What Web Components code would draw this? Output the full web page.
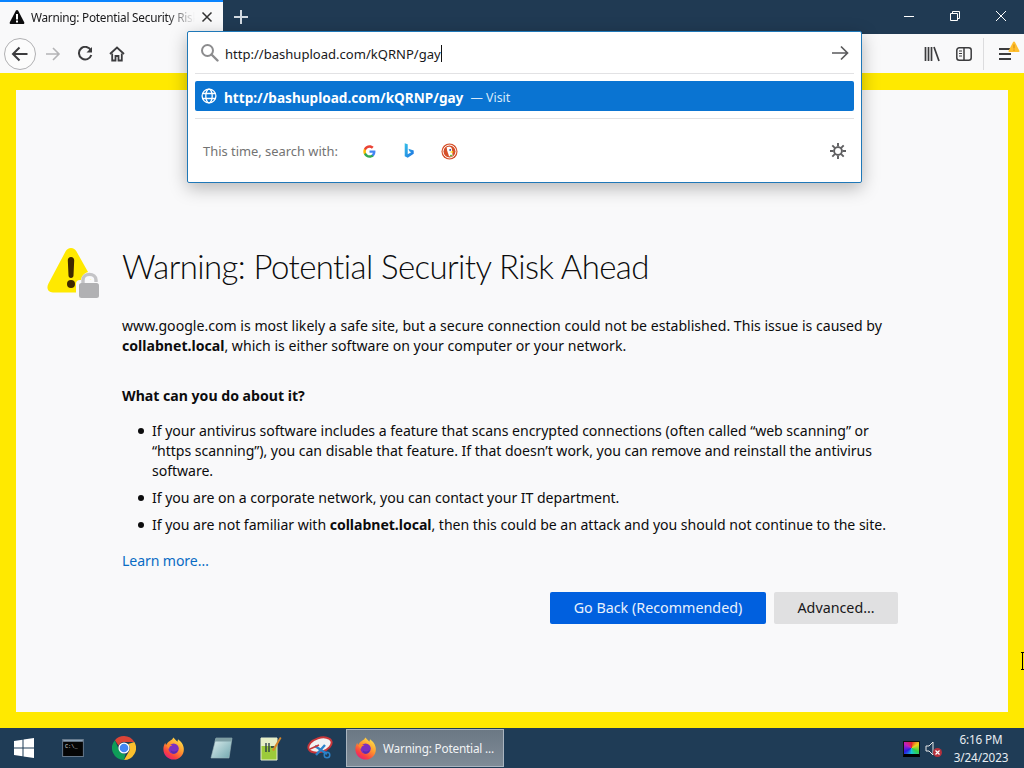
<!DOCTYPE html>
<html lang="en">
<head>
<meta charset="utf-8">
<title>Warning: Potential Security Risk Ahead</title>
<style>
  html, body { margin: 0; padding: 0; height: 100%; overflow: hidden; }
  body { font-family: "Noto Sans", "Open Sans", sans-serif; }
</style>
</head>
<body>
<app-window>
  <browser-tabbar slot="top"></browser-tabbar>
  <browser-toolbar slot="top"></browser-toolbar>
  <cert-error slot="main"></cert-error>
  <url-panel slot="main"></url-panel>
  <win-taskbar slot="bottom"></win-taskbar>
</app-window>

<script>
const FIREFOX = `
<svg viewBox="2 0 28 30.500" width="100%" height="100%">
  <defs>
    <linearGradient id="fxa" x1="0.8" y1="0.05" x2="0.2" y2="1">
      <stop offset="0" stop-color="#ffe14a"/><stop offset=".4" stop-color="#ff9a2e"/>
      <stop offset=".75" stop-color="#f9423f"/><stop offset="1" stop-color="#e31587"/>
    </linearGradient>
  </defs>
  <path fill="url(#fxa)" d="M16 30C8 30 2.500 24 2.500 16.500c0-3 .9-5.800 2.400-8 .1 1.300.6 2.400 1.300 3 .6-2.300 2.300-4.200 4.500-5.300 1.500-.8 3.300-1.200 4.300-4.200 2.200 1.600 2.800 3.500 5.500 5.200 0-.8.100-1.800.6-3.200 4.200 2.800 7.400 7.500 7.400 12.500C28.700 24 23 30 16 30z"/>
  <circle cx="15.500" cy="16" r="6.600" fill="#7d2fc0"/>
  <path fill="#ff8a2a" d="M6 11c3 .5 5-.3 8 .8-2.500.5-4.500 2-4.300 5-.8-1.500-2.800-3.200-3.700-5.800z"/>
  <path fill="#5b2ea8" d="M12 18c2 2.500 6 2.500 9-.5-.5 3-3 5-5.500 5-2 0-3.200-2-3.500-4.500z"/>
</svg>`;

class AppWindow extends HTMLElement {
  constructor() {
    super();
    this.attachShadow({ mode: "open" }).innerHTML = `
    <style>
      :host { display: flex; flex-direction: column; width: 1024px; height: 768px; position: relative; overflow: hidden; }
      .main { flex: 1; display: flex; min-height: 0; }
    </style>
    <slot name="top"></slot>
    <div class="main"><slot name="main"></slot></div>
    <slot name="bottom"></slot>`;
  }
}

class BrowserTabbar extends HTMLElement {
  constructor() {
    super();
    this.attachShadow({ mode: "open" }).innerHTML = `
    <style>
      :host { display: flex; height: 34px; background: #203a53; color: #fff; flex: none; }
      .tab { width: 223px; box-sizing: border-box; background: #f9f9fa; border-top: 2px solid #0a84ff; display: flex; align-items: center; padding: 0 0 2px 9px; color: #18181a; }
      .label { font-size: 11.8px; letter-spacing: -.25px; width: 164px; margin-left: 6px; white-space: nowrap; overflow: hidden; -webkit-mask-image: linear-gradient(to right, #000 135px, transparent 164px); mask-image: linear-gradient(to right, #000 135px, transparent 164px); }
      .close { margin-left: 6px; display: flex; }
      .plus { width: 34px; margin-left: 1px; display: flex; align-items: center; justify-content: center; }
      .space { flex: 1; }
      .ctl { width: 46px; display: flex; align-items: center; justify-content: center; padding-bottom: 3px; box-sizing: border-box; }
    </style>
    <div class="tab">
      <svg width="16" height="16" viewBox="0 0 16 16"><path fill="#0c0c0d" d="M8 1c.5 0 .9.300 1.200.8l6 11.400c.5 1-.1 1.800-1.100 1.800H1.900C.9 15 .3 14.200.8 13.200l6-11.400C7.100 1.300 7.500 1 8 1z"/><rect x="7" y="5" width="2" height="5.500" fill="#fff"/><rect x="7" y="11.500" width="2" height="2" fill="#fff"/></svg>
      <span class="label">Warning: Potential Security Risk Ahead</span>
      <span class="close"><svg width="12" height="12" viewBox="0 0 12 12"><path d="M1.500 1.500l9 9M10.500 1.500l-9 9" stroke="#333" stroke-width="1.500" fill="none"/></svg></span>
    </div>
    <div class="plus"><svg width="16" height="16" viewBox="0 0 16 16"><path d="M8 1v14M1 8h14" stroke="#d3dae1" stroke-width="2" fill="none"/></svg></div>
    <div class="space"></div>
    <div class="ctl"><svg width="12" height="12" viewBox="0 0 12 12"><path d="M1 6.500h10" stroke="#fff" fill="none"/></svg></div>
    <div class="ctl"><svg width="12" height="12" viewBox="0 0 12 12"><path d="M1.500 3.500h7v7h-7zM3.500 3.500v-2h7v7h-2" stroke="#fff" fill="none"/></svg></div>
    <div class="ctl"><svg width="12" height="12" viewBox="0 0 12 12"><path d="M1 1l10 10M11 1L1 11" stroke="#fff" fill="none"/></svg></div>`;
  }
}

class ToolButton extends HTMLElement {
  constructor() {
    super();
    this.attachShadow({ mode: "open" }).innerHTML = `
    <style>
      :host { display: flex; align-items: center; justify-content: center; width: 32px; height: 32px; position: relative; color: #3c3c3e; flex: none; }
      :host([ring]) { box-sizing: border-box; border: 1px solid #b1b1b3; border-radius: 50%; background: #fcfcfc; }
      :host([dim]) { color: #b4b4b6; }
    </style>
    <slot></slot>`;
  }
}

class BrowserToolbar extends HTMLElement {
  constructor() {
    super();
    this.attachShadow({ mode: "open" }).innerHTML = `
    <style>
      :host { display: flex; align-items: center; height: 39px; background: #f9f9fa; padding: 0 3px 0 4px; box-sizing: border-box; flex: none; position: relative; }
      .space { flex: 1; }
      .fwd { margin-left: 1px; }
      .sep { width: 1px; height: 32px; background: #dcdcde; margin: 0 5px 0 3px; }
      .badge { position: absolute; left: 19px; top: 3px; }
    </style>
    <tool-button ring><svg width="18" height="18" viewBox="0 0 18 18"><path d="M16.500 9H2M8.500 2.500L2 9l6.500 6.500" fill="none" stroke="currentColor" stroke-width="2"/></svg></tool-button>
    <tool-button dim class="fwd"><svg width="16" height="16" viewBox="0 0 16 16"><path d="M1 8h13M8 2l6 6-6 6" fill="none" stroke="currentColor" stroke-width="1.600"/></svg></tool-button>
    <tool-button><svg width="16" height="16" viewBox="0 0 16 16"><path d="M14 4.500A6.300 6.300 0 1 0 14.300 9" fill="none" stroke="currentColor" stroke-width="2"/><path d="M15 1v5.500H9.500z" fill="currentColor"/></svg></tool-button>
    <tool-button><svg width="16" height="16" viewBox="0 0 16 16"><path d="M1 8l7-6.500L15 8" fill="none" stroke="currentColor" stroke-width="1.800"/><path d="M3.200 7.500V14.500h3.300V10h3v4.500h3.300V7.500" fill="none" stroke="currentColor" stroke-width="1.800"/></svg></tool-button>
    <div class="space"></div>
    <tool-button><svg width="16" height="16" viewBox="0 0 16 16"><path d="M1.500 1v14M4.500 1v14M7.500 1v14M10 1l5 14" fill="none" stroke="currentColor" stroke-width="1.700"/></svg></tool-button>
    <tool-button><svg width="16" height="16" viewBox="0 0 16 16"><rect x=".8" y="1.800" width="14.400" height="12.400" rx="2.500" fill="none" stroke="currentColor" stroke-width="1.500"/><path d="M8 2v12" stroke="currentColor" stroke-width="1.500"/><path d="M3 5h3M3 7.500h3M3 10h3" stroke="currentColor" stroke-width="1.200"/></svg></tool-button>
    <div class="sep"></div>
    <tool-button>
      <svg width="16" height="16" viewBox="0 0 16 16"><path d="M2 3h12M2 8h12M2 13h12" stroke="currentColor" stroke-width="2" fill="none"/></svg>
      <svg class="badge" width="12" height="12" viewBox="0 0 12 12"><path d="M6 .5c.4 0 .7.200.9.600l4.500 8.600c.4.800-.1 1.300-.8 1.300H1.400c-.8 0-1.200-.6-.8-1.300L5.100 1.100C5.300.7 5.600.5 6 .5z" fill="#ffbf2e"/><path d="M6 3.500v4M6 8.500v1.200" stroke="#d98f10" stroke-width="1.200" fill="none"/></svg>
    </tool-button>`;
  }
}

class UrlPanel extends HTMLElement {
  constructor() {
    super();
    this.attachShadow({ mode: "open" }).innerHTML = `
    <style>
      :host { display: block; position: absolute; left: 187px; top: 31px; width: 675px; height: 152px; box-sizing: border-box; background: #fff; border: 1px solid #1f78b8; border-radius: 2px; box-shadow: 0 5px 18px rgba(0,0,0,.28); color: #18181a; z-index: 5; }
      .input { display: flex; align-items: center; height: 41px; padding: 0 12px 0 12px; font-size: 13.05px; }
      .input .q { width: 19px; height: 19px; flex: none; margin-right: 6px; }
      .url { padding-top: 2px; }
      .cursor { display: inline-block; width: 1px; height: 17px; background: #111; vertical-align: -3px; }
      .grow { flex: 1; }
      hr { border: 0; height: 1px; background: #e2e2e4; margin: 0 7px; }
      .row { margin: 7px; height: 30px; border-radius: 2px; background: #0a74d2; color: #fff; display: flex; align-items: center; padding-left: 6px; font-size: 13.6px; box-sizing: border-box; }
      .row svg { margin-right: 7px; flex: none; }
      .row b { font-weight: 700; padding-top: 2px; }
      .row .v { font-size: 12.4px; margin-left: 7px; padding-top: 2px; color: #d7e9fa; }
      .oneoff { display: flex; align-items: center; height: 64px; padding: 0 15px; color: #737373; font-size: 12.9px; }
      .oneoff span.t { width: 146px; flex: none; white-space: nowrap; }
      .eng { width: 40px; display: flex; justify-content: center; flex: none; }
    </style>
    <div class="input">
      <svg class="q" viewBox="0 0 19 19"><circle cx="7.500" cy="7.500" r="5.500" fill="none" stroke="#8c8c8e" stroke-width="2"/><path d="M11.500 11.500l6 6" stroke="#8c8c8e" stroke-width="2.400" stroke-linecap="round"/></svg>
      <span class="url">http://bashupload.com/kQRNP/gay<span class="cursor"></span></span>
      <span class="grow"></span>
      <svg width="18" height="18" viewBox="0 0 18 18"><path d="M1 9h15.500M10 2.500L16.500 9 10 15.500" fill="none" stroke="#5a5a5c" stroke-width="1.700"/></svg>
    </div>
    <hr>
    <div class="row">
      <svg width="16" height="16" viewBox="0 0 16 16" fill="none" stroke="#fff" stroke-width="1.300"><circle cx="8" cy="8" r="6.900"/><ellipse cx="8" cy="8" rx="3.200" ry="6.900"/><path d="M1.600 5.500h12.800M1.600 10.500h12.800"/></svg>
      <b>http://bashupload.com/kQRNP/gay</b><span class="v">— Visit</span>
    </div>
    <hr>
    <div class="oneoff">
      <span class="t">This time, search with:</span>
      <span class="eng"><svg width="13" height="13" viewBox="0 0 24 24"><path fill="#4285f4" d="M23 12.300c0-.8-.1-1.600-.2-2.300H12v4.400h6.200c-.3 1.400-1.100 2.600-2.300 3.400v2.800h3.700c2.100-2 3.400-4.900 3.400-8.300z"/><path fill="#34a853" d="M12 23.500c3.100 0 5.700-1 7.600-2.800l-3.700-2.900c-1 .7-2.300 1.100-3.900 1.100-3 0-5.500-2-6.400-4.800H1.800v3C3.700 21 7.500 23.500 12 23.500z"/><path fill="#fbbc05" d="M5.600 14.100c-.5-1.400-.5-2.900 0-4.300v-3H1.800c-1.600 3.200-1.600 7 0 10.300z"/><path fill="#ea4335" d="M12 5c1.700 0 3.200.6 4.400 1.700l3.300-3.300C17.700 1.600 15 .5 12 .5 7.500.5 3.700 3 1.800 6.800l3.800 3C6.500 7 9 5 12 5z"/></svg></span>
      <span class="eng"><svg width="12" height="16" viewBox="0 0 14 18"><defs><linearGradient id="bg" x1="0" y1="0" x2="1" y2="1"><stop offset="0" stop-color="#35c1e8"/><stop offset="1" stop-color="#1c6fe0"/></linearGradient></defs><path fill="url(#bg)" d="M2 0l3.500 1.200v11.600l4-2.400-2-1-1.200-3L12.500 8.500v3.800L5.500 17 2 15z"/></svg></span>
      <span class="eng"><svg width="17" height="17" viewBox="0 0 18 18"><circle cx="9" cy="9" r="8.500" fill="#d5502a"/><circle cx="9" cy="9" r="6.800" fill="none" stroke="#fff" stroke-width="1"/><path d="M6 4.500c2-1 5-.8 5.500 1.500l.8 8H8.500L6.500 8z" fill="#fff"/><circle cx="9.700" cy="7.300" r="1" fill="#2d4f8e"/><path d="M9 9.500l4-1-.5 2.200z" fill="#fdd20a"/><path d="M9.500 12.500h2.500v1.500H9.500z" fill="#65bc46"/></svg></span>
      <span class="grow"></span>
      <svg width="16" height="16" viewBox="0 0 16 16"><g stroke="#5f5f61" stroke-width="1.900" fill="none"><circle cx="8" cy="8" r="3.900"/><path d="M8 0v3.500M8 12.500V16M0 8h3.500M12.500 8H16M2.300 2.300l2.500 2.500M11.200 11.200l2.500 2.500M13.700 2.300l-2.500 2.500M4.800 11.200l-2.500 2.500"/></g></svg>
    </div>`;
  }
}

class CertError extends HTMLElement {
  constructor() {
    super();
    this.attachShadow({ mode: "open" }).innerHTML = `
    <style>
      :host { display: flex; flex: 1; position: relative; box-sizing: border-box; height: 655px; background: #ffe900; padding: 17px 16px 16px; }
      .card { flex: 1; background: #f9f9fa; box-sizing: border-box; padding: 153px 110px 0 106px; color: #0c0c0d; position: relative; font-size: 14.1px; line-height: 20px; }
      .icon { position: absolute; left: 31px; top: 158px; }
      h1 { margin: 0; font-size: 33px; letter-spacing: -.6px; font-variant-ligatures: none; line-height: 46px; font-weight: 300; font-family: Lato, "Noto Sans", sans-serif; white-space: nowrap; }
      p { margin: 27px 0 0; }
      h3 { margin: 30px 0 0; font-size: 14.1px; font-weight: 700; line-height: 20px; }
      ul { margin: 15px 0 0; padding: 0 0 0 30px; list-style: none; letter-spacing: -.04px; }
      li { margin-bottom: 7px; position: relative; }
      li::before { content: ""; position: absolute; left: -14px; top: 7px; width: 6px; height: 6px; border-radius: 50%; background: #0c0c0d; }
      li:last-child { margin-bottom: 0; }
      a { display: block; margin-top: 16px; color: #0a6cc4; text-decoration: none; letter-spacing: -.1px; }
      .btns { display: flex; justify-content: flex-end; gap: 8px; margin-top: 21px; font-size: 14.3px; }
      .btn { height: 32px; line-height: 32px; text-align: center; border-radius: 2px; background: #e0e0e1; color: #18181a; width: 124px; }
      .btn.primary { width: 216px; background: #0060df; color: #e8f1fd; }
      .pointer { position: absolute; left: 1021px; top: 579px; }
    </style>
    <div class="card">
      <svg class="icon" width="56" height="54" viewBox="0 0 56 54">
        <path d="M24 0c2.500 0 4.200 1.300 5.500 3.500l18 32c2.500 4.500.5 9-4.500 9H6c-5 0-7-4.500-4.500-9l17-32C19.800 1.300 21.500 0 24 0z" fill="#ffe900"/>
        <path d="M24 9c2 0 3.200 1.300 3.200 3.200l-.7 15.300c0 1.500-1 2.500-2.500 2.500s-2.500-1-2.500-2.500l-.7-15.300C20.800 10.300 22 9 24 9z" fill="#3e2800"/>
        <circle cx="24" cy="36" r="4" fill="#3e2800"/>
        <path d="M38 38v-5c0-7 11-7 11 0v5" fill="none" stroke="#f9f9fa" stroke-width="8"/>
        <rect x="29" y="32" width="26" height="22" rx="4" fill="#f9f9fa"/>
        <path d="M36 38v-6c0-7.500 13-7.500 13 0v2" fill="none" stroke="#c4c4c6" stroke-width="3.400"/>
        <rect x="32" y="35" width="20" height="15" rx="2.500" fill="#b1b1b3"/>
      </svg>
      <h1>Warning: Potential Security Risk Ahead</h1>
      <p>www.google.com is most likely a safe site, but a secure connection could not be established. This issue is caused by <b>collabnet.local</b>, which is either software on your computer or your network.</p>
      <h3>What can you do about it?</h3>
      <ul>
        <li>If your antivirus software includes a feature that scans encrypted connections (often called “web scanning” or “https scanning”), you can disable that feature. If that doesn’t work, you can remove and reinstall the antivirus software.</li>
        <li>If you are on a corporate network, you can contact your IT department.</li>
        <li>If you are not familiar with <b>collabnet.local</b>, then this could be an attack and you should not continue to the site.</li>
      </ul>
      <a>Learn more…</a>
      <div class="btns"><span class="btn primary">Go Back (Recommended)</span><span class="btn">Advanced…</span></div>
    </div>
    <svg class="pointer" width="3" height="18" viewBox="0 0 3 18"><path d="M0 .5h3M1.500 .5v17M0 17.500h3" stroke="#000" fill="none"/></svg>`;
  }
}

class TaskIcon extends HTMLElement {
  constructor() {
    super();
    this.attachShadow({ mode: "open" }).innerHTML = `
    <style>
      :host { display: flex; align-items: center; justify-content: center; height: 40px; width: var(--w, 49px); flex: none; }
    </style>
    <slot></slot>`;
  }
}

class FirefoxLogo extends HTMLElement {
  constructor() {
    super();
    this.attachShadow({ mode: "open" }).innerHTML = `
    <style>:host { display: inline-block; width: 24px; height: 24px; flex: none; }</style>${FIREFOX}`;
  }
}

class WinTaskbar extends HTMLElement {
  constructor() {
    super();
    this.attachShadow({ mode: "open" }).innerHTML = `
    <style>
      :host { display: flex; height: 40px; background: #1f3c56; flex: none; color: #fff; align-items: center; font-size: 12px; }
      .active { width: 158px; height: 38px; box-sizing: border-box; border: 1px solid #a9b4bf; background: linear-gradient(#6b7884, #7f8b96); display: flex; align-items: center; padding-left: 7px; color: #f1f3f5; font-size: 11.8px; letter-spacing: -.2px; white-space: nowrap; }
      .active firefox-logo { margin-right: 5px; }
      .space { flex: 1; }
      .tray { display: flex; align-items: center; gap: 5px; margin-right: 4px; padding-top: 1px; }
      .screen { display: block; width: 15px; height: 12px; margin-left: 1px; border: 1px solid #111; border-bottom: 3px solid #000; background: conic-gradient(#e3262b, #f2d31c, #2fd14a, #17c6d8, #2a1de0, #c01fc0, #e3262b); }
      .clock { width: 68px; margin-right: 9px; text-align: center; line-height: 18px; color: #e8edf2; font-size: 11.7px; letter-spacing: -.1px; }
      .mute { position: relative; width: 18px; height: 18px; display: block; }
    </style>
    <task-icon style="--w:48px"><svg width="20" height="20" viewBox="0 0 20 20"><path fill="#fff" d="M0 3l8.500-1.200v7.700H0zM9.500 1.600L20 0v9.500H9.500zM0 10.500h8.500v7.700L0 17zM9.500 10.500H20V20L9.500 18.400z"/></svg></task-icon>
    <task-icon style="--w:50px"><svg width="22" height="18" viewBox="0 0 24 20"><rect x=".5" y=".5" width="23" height="19" fill="#050505" stroke="#6f8295"/><rect x="1" y="1" width="22" height="2" fill="#8da2b6"/><text x="3" y="10" font-size="6" fill="#dcdcdc" font-family="Liberation Mono, monospace">C:\\_</text></svg></task-icon>
    <task-icon style="--w:52px"><svg width="24" height="24" viewBox="0 0 24 24"><path fill="#db4437" d="M12 0a12 12 0 0 1 10.400 6H12a6 6 0 0 0-5.500 3.500L2.900 4.200A12 12 0 0 1 12 0z"/><path fill="#fbc02d" d="M22.400 6A12 12 0 0 1 12 24l5.200-9A6 6 0 0 0 16 8z" /><path fill="#0f9d58" d="M2.900 4.200L7.500 15A6 6 0 0 0 12 18l-.1 0 1.600-.1L12 24A12 12 0 0 1 2.900 4.200z"/><circle cx="12" cy="12" r="5.600" fill="#fff"/><circle cx="12" cy="12" r="4.300" fill="#4285f4"/></svg></task-icon>
    <task-icon style="--w:47px"><firefox-logo></firefox-logo></task-icon>
    <task-icon style="--w:49px"><svg width="24" height="24" viewBox="0 0 24 24"><defs><linearGradient id="np" x1="0" y1="0" x2="1" y2="1"><stop offset="0" stop-color="#e4f2f2"/><stop offset="1" stop-color="#6fa6ae"/></linearGradient></defs><path d="M6 2h16l-3 20H1z" fill="url(#np)" stroke="#9fb7bb" stroke-width=".6"/><path d="M6 2h16l-.6 3.500H4.500z" fill="#7f9ea3"/></svg></task-icon>
    <task-icon style="--w:48px"><svg width="24" height="26" viewBox="0 0 24 26"><path d="M3 3h16v22H3z" fill="#9ccb3a" stroke="#e7efd0"/><path d="M3 3h16v8H3z" fill="#e6efc8"/><path d="M8 8v9M11 8v9M13 12h3" stroke="#234" stroke-width="1.300" fill="none"/><path d="M14 15l8-13 1.500 1L16 16z" fill="#d8892a"/></svg></task-icon>
    <task-icon style="--w:52px"><svg width="26" height="24" viewBox="0 0 26 24"><ellipse cx="13" cy="9" rx="12" ry="7" fill="#f2f2f2" stroke="#c9363a" stroke-width="2" transform="rotate(-18 13 9)"/><path d="M8 10l12 8M18 9L9 19" stroke="#2b82c9" stroke-width="2.400"/><circle cx="20" cy="19" r="2.800" fill="none" stroke="#2b82c9" stroke-width="1.500"/><path d="M3 13l9-4" stroke="#c9363a" stroke-width="1.500"/></svg></task-icon>
    <div class="active"><firefox-logo></firefox-logo>Warning: Potential ...</div>
    <div class="space"></div>
    <div class="tray">
      <span class="screen"></span>
      <span class="mute"><svg width="18" height="18" viewBox="0 0 18 18"><path d="M1 6h3l4-4v13l-4-4H1z" fill="none" stroke="#e6e6e6"/><circle cx="12.500" cy="12.500" r="4.500" fill="#b5303c"/><path d="M10.500 10.500l4 4M14.500 10.500l-4 4" stroke="#fff" stroke-width="1.200"/></svg></span>
    </div>
    <div class="clock">6:16 PM<br>3/24/2023</div>`;
  }
}

customElements.define("app-window", AppWindow);
customElements.define("browser-tabbar", BrowserTabbar);
customElements.define("tool-button", ToolButton);
customElements.define("browser-toolbar", BrowserToolbar);
customElements.define("url-panel", UrlPanel);
customElements.define("cert-error", CertError);
customElements.define("task-icon", TaskIcon);
customElements.define("firefox-logo", FirefoxLogo);
customElements.define("win-taskbar", WinTaskbar);
</script>
</body>
</html>
